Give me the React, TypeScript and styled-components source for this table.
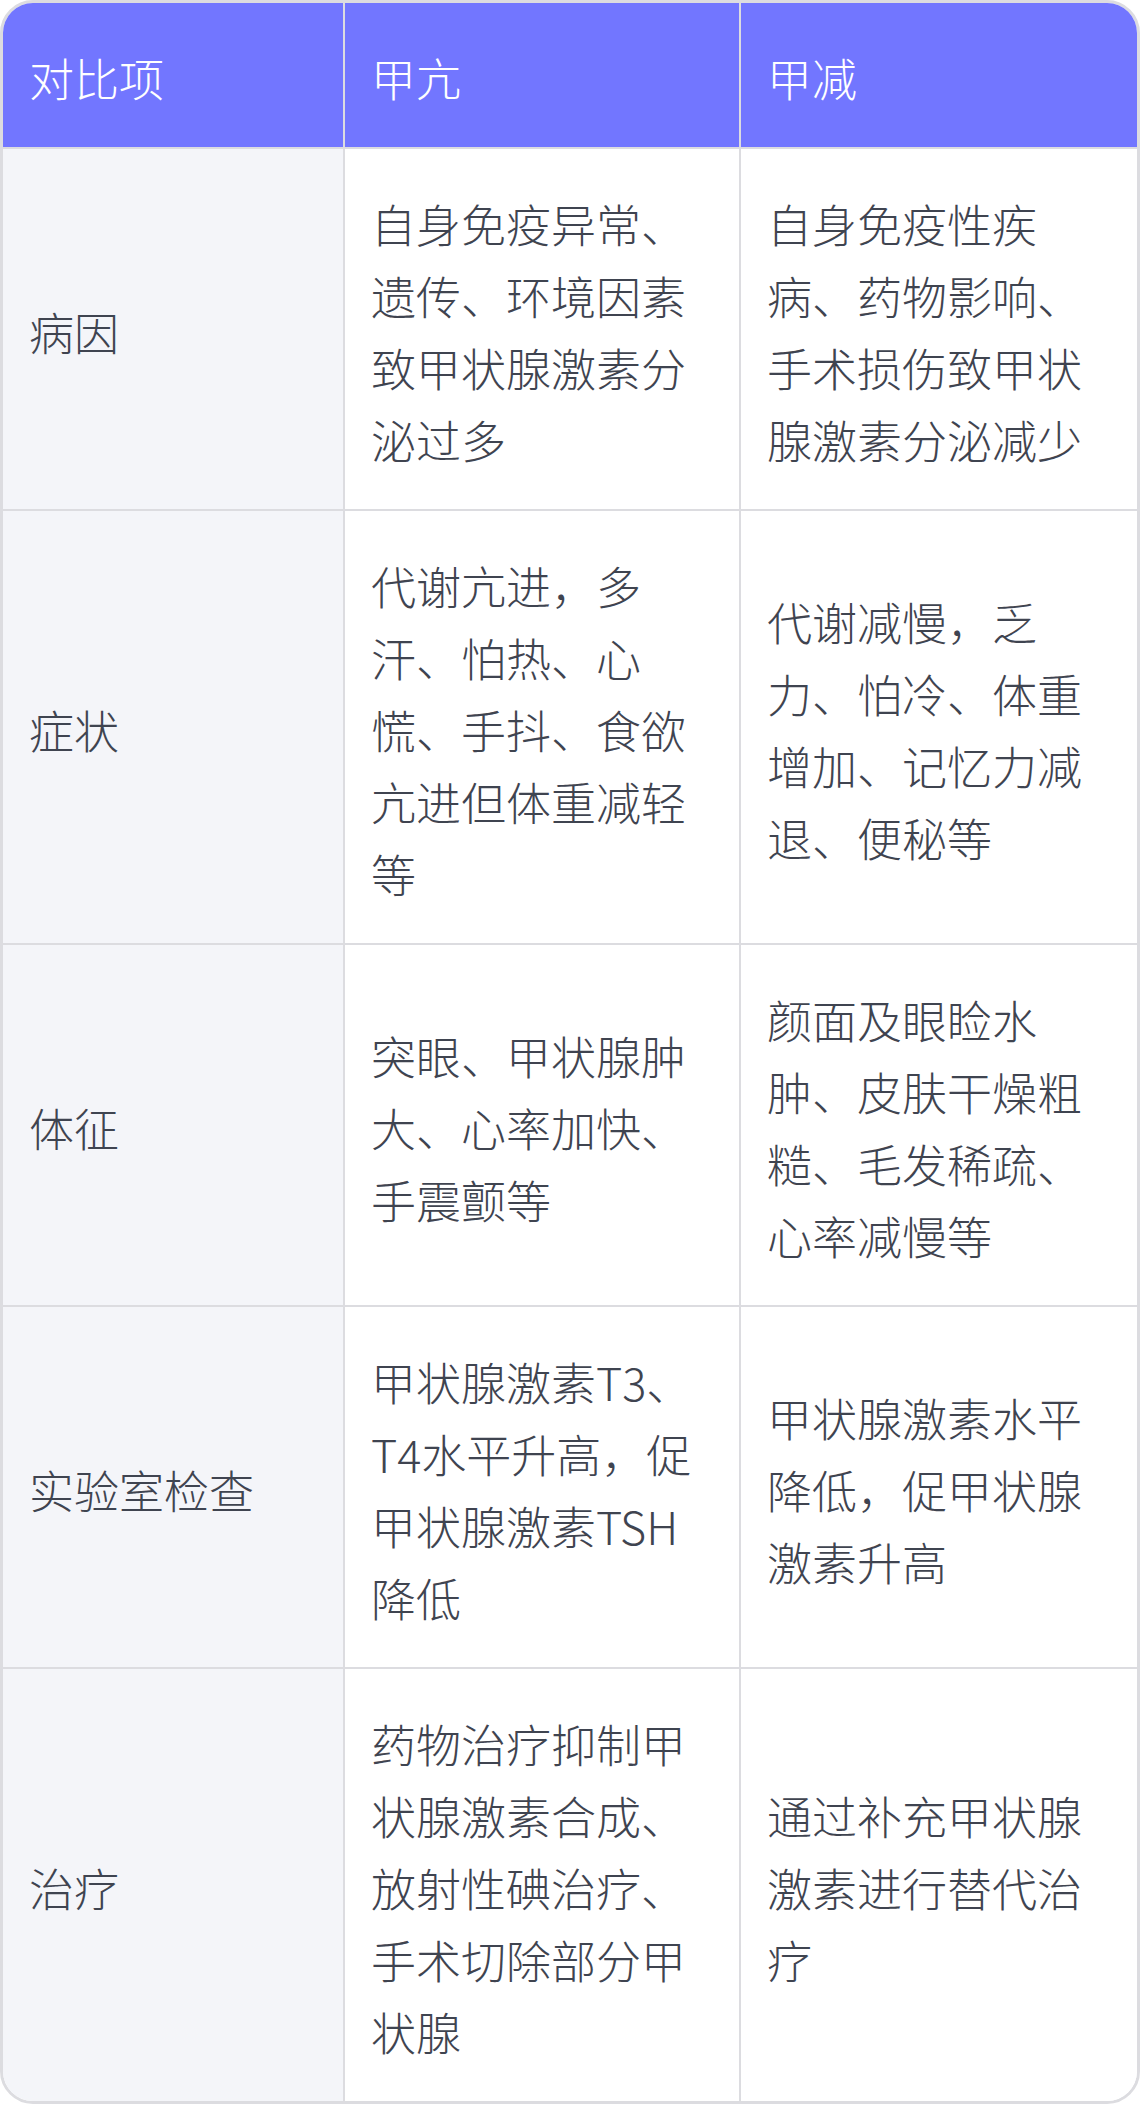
import React from "react"
import styled, { createGlobalStyle } from "styled-components"

const GlobalStyle = createGlobalStyle`
  html, body {
    margin: 0;
    padding: 0;
    background: #ffffff;
  }
  body {
    font-family: "Noto Sans CJK SC", "Noto Sans", sans-serif;
  }
`

const Frame = styled.div`
  width: 1140px;
  box-sizing: border-box;
  border: 3px solid #dcdce0;
  border-radius: 33px;
  overflow: hidden;
`

const Table = styled.table`
  width: 100%;
  table-layout: fixed;
  border-collapse: separate;
  border-spacing: 0;
  font-size: 45px;
  font-weight: 300;
  line-height: 72px;
`

const HeadCell = styled.th`
  background: #7276ff;
  color: #ffffff;
  font-weight: 300;
  text-align: left;
  padding: 39px 26px 33px;
  border-bottom: 2px solid #dcdce0;
  border-right: 2px solid #dcdce0;
  &:last-child {
    border-right: none;
  }
`

const Cell = styled.td<{ $label?: boolean }>`
  background: ${(p) => (p.$label ? "#f4f5f9" : "#ffffff")};
  color: #3f4450;
  vertical-align: middle;
  padding: 39px 26px 33px;
  border-bottom: 2px solid #dcdce0;
  border-right: 2px solid #dcdce0;
  &:last-child {
    border-right: none;
  }
  tr:last-child > & {
    border-bottom: none;
  }
`

interface Row {
  item: string
  hyper: string
  hypo: string
}

const rows: Row[] = [
  {
    item: "病因",
    hyper: "自身免疫异常、遗传、环境因素致甲状腺激素分泌过多",
    hypo: "自身免疫性疾病、药物影响、手术损伤致甲状腺激素分泌减少",
  },
  {
    item: "症状",
    hyper: "代谢亢进，多汗、怕热、心慌、手抖、食欲亢进但体重减轻等",
    hypo: "代谢减慢，乏力、怕冷、体重增加、记忆力减退、便秘等",
  },
  {
    item: "体征",
    hyper: "突眼、甲状腺肿大、心率加快、手震颤等",
    hypo: "颜面及眼睑水肿、皮肤干燥粗糙、毛发稀疏、心率减慢等",
  },
  {
    item: "实验室检查",
    hyper: "甲状腺激素T3、T4水平升高，促甲状腺激素TSH降低",
    hypo: "甲状腺激素水平降低，促甲状腺激素升高",
  },
  {
    item: "治疗",
    hyper: "药物治疗抑制甲状腺激素合成、放射性碘治疗、手术切除部分甲状腺",
    hypo: "通过补充甲状腺激素进行替代治疗",
  },
]

export default function App(): React.JSX.Element {
  return (
    <>
      <GlobalStyle />
      <Frame>
        <Table>
          <colgroup>
            <col style={{ width: 342 }} />
            <col style={{ width: 396 }} />
            <col style={{ width: 396 }} />
          </colgroup>
          <thead>
            <tr>
              <HeadCell>对比项</HeadCell>
              <HeadCell>甲亢</HeadCell>
              <HeadCell>甲减</HeadCell>
            </tr>
          </thead>
          <tbody>
            {rows.map((r) => (
              <tr key={r.item}>
                <Cell $label>{r.item}</Cell>
                <Cell>{r.hyper}</Cell>
                <Cell>{r.hypo}</Cell>
              </tr>
            ))}
          </tbody>
        </Table>
      </Frame>
    </>
  )
}
